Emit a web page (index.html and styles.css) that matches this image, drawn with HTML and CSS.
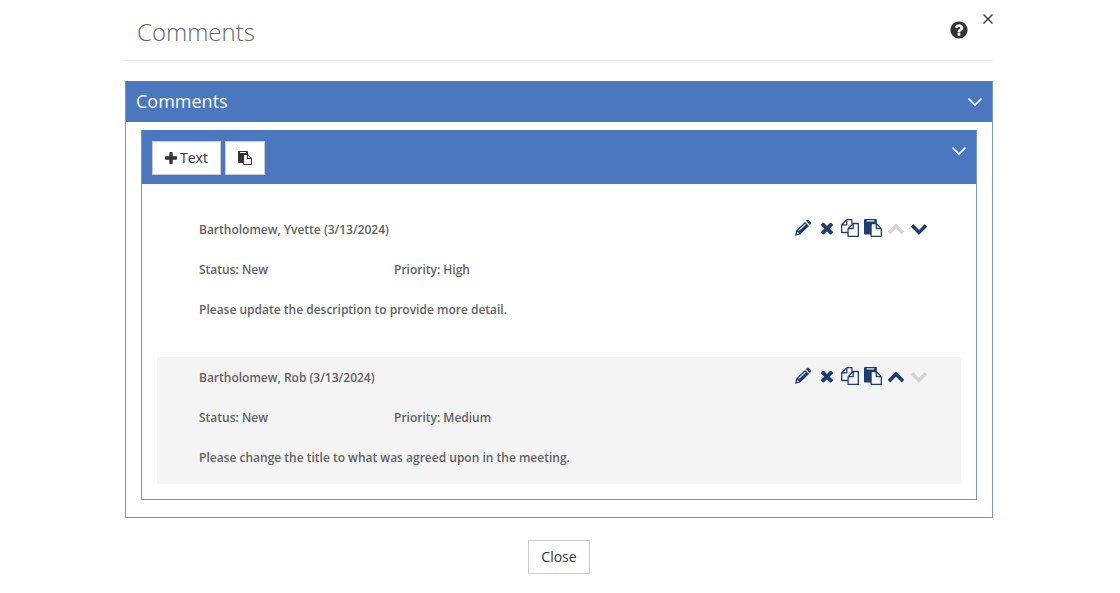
FILE: index.html
```html
<!DOCTYPE html>
<html lang="en">
<head>
    <meta charset="UTF-8">
    <meta name="viewport" content="width=device-width, initial-scale=1.0">
    <title>Comments</title>
    <link rel="stylesheet" href="styles.css">
</head>
<body>
<svg class="sprite" aria-hidden="true">
    <symbol id="pencil" viewBox="0 0 18 18">
        <path fill-rule="evenodd" d="M0 16.800l1.300-5.600L10 3l4 4-8.800 8.400zM1.800 15l2.300-.6-1.700-1.700zM3.900 12l6.900-6.600-.7-.7-6.900 6.600zM11 2l1-.9q.9-.8 1.800 0l2 2q.8.900 0 1.800l-.9 1z"/>
    </symbol>
    <symbol id="times" viewBox="0 0 1792 1792">
        <path d="M1490 1322q0 40-28 68l-136 136q-28 28-68 28t-68-28l-294-294-294 294q-28 28-68 28t-68-28l-136-136q-28-28-28-68t28-68l294-294-294-294q-28-28-28-68t28-68l136-136q28-28 68-28t68 28l294 294 294-294q28-28 68-28t68 28l136 136q28 28 28 68t-28 68l-294 294 294 294q28 28 28 68z"/>
    </symbol>
    <symbol id="copy" viewBox="0 0 1792 1792">
        <path d="M1696 384q40 0 68 28t28 68v1216q0 40-28 68t-68 28h-960q-40 0-68-28t-28-68v-288h-544q-40 0-68-28t-28-68v-672q0-40 20-88t48-76l408-408q28-28 76-48t88-20h416q40 0 68 28t28 68v328q68-40 128-40h416zm-544 213l-299 299h299v-299zm-640-384l-299 299h299v-299zm196 647l316-316v-416h-384v416q0 40-28 68t-68 28h-416v640h512v-256q0-40 20-88t48-76zm956 804v-1152h-384v416q0 40-28 68t-68 28h-416v640h896z"/>
    </symbol>
    <symbol id="paste" viewBox="0 0 1792 1792">
        <path d="M768 1664h896v-640h-416q-40 0-68-28t-28-68v-416h-384v1152zm256-1440v-64q0-13-9.500-22.500t-22.500-9.500h-704q-13 0-22.500 9.500t-9.500 22.500v64q0 13 9.500 22.500t22.500 9.500h704q13 0 22.500-9.500t9.500-22.500zm256 672h299l-299-299v299zm512 128v672q0 40-28 68t-68 28h-960q-40 0-68-28t-28-68v-160h-544q-40 0-68-28t-28-68v-1344q0-40 28-68t68-28h1088q40 0 68 28t28 68v328q21 13 36 28l408 408q28 28 48 76t20 88z"/>
    </symbol>
    <symbol id="up" viewBox="0 0 1792 1792">
        <path d="M1683 1331l-166 165q-19 19-45 19t-45-19l-531-531-531 531q-19 19-45 19t-45-19l-166-165q-19-19-19-45.500t19-45.500l742-741q19-19 45-19t45 19l742 741q19 19 19 45.500t-19 45.500z"/>
    </symbol>
    <symbol id="down" viewBox="0 0 1792 1792">
        <path d="M1683 808l-742 741q-19 19-45 19t-45-19l-742-741q-19-19-19-45.500t19-45.500l166-165q19-19 45-19t45 19l531 531 531-531q19-19 45-19t45 19l166 165q19 19 19 45.500t-19 45.500z"/>
    </symbol>
    <symbol id="plus" viewBox="192 128 1408 1408">
        <path d="M1600 736v192q0 40-28 68t-68 28h-416v416q0 40-28 68t-68 28h-192q-40 0-68-28t-28-68v-416h-416q-40 0-68-28t-28-68v-192q0-40 28-68t68-28h416v-416q0-40 28-68t68-28h192q40 0 68 28t28 68v416h416q40 0 68 28t28 68z"/>
    </symbol>
    <symbol id="help" viewBox="0 0 1792 1792">
        <path d="M1024 1376v-192q0-14-9-23t-23-9h-192q-14 0-23 9t-9 23v192q0 14 9 23t23 9h192q14 0 23-9t9-23zm256-672q0-88-55.500-163t-138.500-116-170-41q-243 0-371 213-15 24 8 42l132 100q7 6 19 6 16 0 25-12 53-68 86-92 34-24 86-24 48 0 85.500 26t37.500 59q0 38-20 61t-68 45q-63 28-115.500 86.500t-52.500 125.500v36q0 14 9 23t23 9h192q14 0 23-9t9-23q0-19 21.500-49.500t54.500-49.500q32-18 49-28.500t46-35 44.500-48 28-60.500 12.500-81zm384 192q0 209-103 385.500t-279.500 279.500-385.500 103-385.500-103-279.500-279.500-103-385.500 103-385.500 279.500-279.500 385.500-103 385.500 103 279.500 279.500 103 385.500z"/>
    </symbol>
    <symbol id="collapse" viewBox="0 0 14 14">
        <path d="M.5 3.500l6.500 6.500 6.500-6.500" fill="none" stroke="currentColor" stroke-width="1.600"/>
    </symbol>
    <symbol id="cross" viewBox="0 0 10 10">
        <path d="M.5.500l9 9M9.500.500l-9 9" fill="none" stroke="currentColor" stroke-width="1.400"/>
    </symbol>
</svg>

<div class="dialog">
    <header class="dialog-header">
        <h1 class="dialog-title">Comments</h1>
        <button type="button" class="icon-button help" aria-label="Help"><svg><use href="#help"/></svg></button>
        <button type="button" class="icon-button dismiss" aria-label="Dismiss"><svg><use href="#cross"/></svg></button>
    </header>

    <section class="panel">
        <div class="panel-header">
            <h2 class="panel-title">Comments</h2>
            <button type="button" class="icon-button collapse" aria-label="Collapse comments"><svg><use href="#collapse"/></svg></button>
        </div>

        <div class="panel-inner">
            <div class="toolbar">
                <button type="button" class="button"><svg class="plus"><use href="#plus"/></svg>Text</button>
                <button type="button" class="button" aria-label="Paste"><svg class="paste"><use href="#paste"/></svg></button>
                <button type="button" class="icon-button collapse" aria-label="Collapse list"><svg><use href="#collapse"/></svg></button>
            </div>

            <div class="comments">
                <article class="comment">
                    <div class="row">
                        <span>Bartholomew, Yvette (3/13/2024)</span>
                        <div class="actions">
                            <button type="button" class="icon-button" aria-label="Edit"><svg><use href="#pencil"/></svg></button>
                            <button type="button" class="icon-button" aria-label="Delete"><svg><use href="#times"/></svg></button>
                            <button type="button" class="icon-button" aria-label="Copy"><svg><use href="#copy"/></svg></button>
                            <button type="button" class="icon-button" aria-label="Paste"><svg><use href="#paste"/></svg></button>
                            <button type="button" class="icon-button" aria-label="Move up" disabled><svg><use href="#up"/></svg></button>
                            <button type="button" class="icon-button" aria-label="Move down"><svg><use href="#down"/></svg></button>
                        </div>
                    </div>
                    <div class="row">
                        <span class="status">Status: New</span>
                        <span>Priority: High</span>
                    </div>
                    <div class="row">Please update the description to provide more detail.</div>
                </article>

                <article class="comment shaded">
                    <div class="row">
                        <span>Bartholomew, Rob (3/13/2024)</span>
                        <div class="actions">
                            <button type="button" class="icon-button" aria-label="Edit"><svg><use href="#pencil"/></svg></button>
                            <button type="button" class="icon-button" aria-label="Delete"><svg><use href="#times"/></svg></button>
                            <button type="button" class="icon-button" aria-label="Copy"><svg><use href="#copy"/></svg></button>
                            <button type="button" class="icon-button" aria-label="Paste"><svg><use href="#paste"/></svg></button>
                            <button type="button" class="icon-button" aria-label="Move up"><svg><use href="#up"/></svg></button>
                            <button type="button" class="icon-button" aria-label="Move down" disabled><svg><use href="#down"/></svg></button>
                        </div>
                    </div>
                    <div class="row">
                        <span class="status">Status: New</span>
                        <span>Priority: Medium</span>
                    </div>
                    <div class="row">Please change the title to what was agreed upon in the meeting.</div>
                </article>
            </div>
        </div>
    </section>

    <footer class="dialog-footer">
        <button type="button" class="button">Close</button>
    </footer>
</div>
</body>
</html>
```
FILE: styles.css
```css
* {
    box-sizing: border-box;
}

body {
    margin: 0;
    background: #fff;
    color: #626262;
    font-family: "Open Sans", sans-serif;
    font-size: 12px;
}

svg {
    display: block;
    width: 18px;
    height: 18px;
    fill: currentColor;
}

.sprite {
    display: none;
}

.dialog {
    padding: 0 127px 19px 125px;
}

.dialog-header {
    display: flex;
    align-items: flex-start;
    height: 61px;
    padding-left: 12px;
    border-bottom: 1px solid #e8e8e8;
}

.dialog-title {
    flex: 1;
    margin: 0;
    color: #666;
    font-size: 24px;
    font-weight: 300;
    line-height: 64px;
}

.icon-button {
    padding: 0;
    border: none;
    background: none;
    color: #1c3d6e;
    cursor: pointer;
}

.icon-button:disabled {
    color: #d5d5d5;
    cursor: default;
}

.help {
    margin: 20px 14px 0 0;
    color: #333;
}

.help svg {
    width: 20px;
    height: 20px;
}

.dismiss {
    margin-top: 14px;
    color: #333;
}

.dismiss svg {
    width: 10px;
    height: 10px;
}

.panel {
    margin-top: 20px;
    padding-bottom: 17px;
    border: 1px solid #7594cf;
    border-top: none;
}

.panel-header {
    display: flex;
    align-items: center;
    justify-content: space-between;
    height: 41px;
    padding: 0 10px;
    background: #4b77be;
    color: #fff;
}

.panel-title {
    margin: 0;
    font-size: 18px;
    font-weight: 500;
    line-height: 40px;
    align-self: flex-start;
}

.collapse {
    color: #fff;
}

.collapse svg {
    width: 14px;
    height: 14px;
}

.panel-inner {
    margin: 8px 15px 0;
    border: 1px solid #7594cf;
    border-top: none;
}

.toolbar {
    display: flex;
    gap: 4px;
    padding: 11px 10px 9px;
    background: #4b77be;
}

.toolbar .collapse {
    align-self: flex-start;
    margin: 3px 0 0 auto;
}

.button {
    display: flex;
    align-items: center;
    height: 34px;
    padding: 0 12px 1px;
    border: 1px solid #ccc;
    background: #fff;
    color: #333;
    font-family: inherit;
    font-size: 14px;
    line-height: 18px;
    cursor: pointer;
}

.button svg {
    width: 14px;
    height: 14px;
}

.button .plus {
    width: 12px;
    height: 12px;
    margin-right: 3px;
}

.comments {
    display: flex;
    flex-direction: column;
    gap: 20px;
    padding: 26px 15px 15px;
}

.comment {
    padding: 0 33px 7px 42px;
    font-weight: 600;
}

.shaded {
    padding: 1px 33px 6px 42px;
    background: #f4f4f4;
}

.row {
    display: flex;
    line-height: 40px;
}

.status {
    width: 195px;
}

.actions {
    display: flex;
    align-items: center;
    gap: 5px;
    height: 36px;
    margin-left: auto;
}

.dialog-footer {
    display: flex;
    justify-content: center;
    margin-top: 22px;
}
```
